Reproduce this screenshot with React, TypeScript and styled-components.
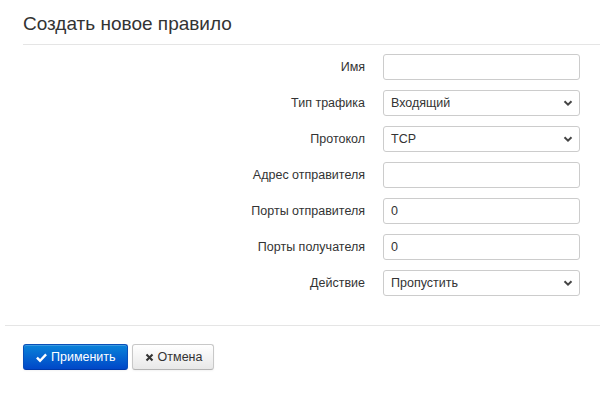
import React from "react";
import styled, { createGlobalStyle } from "styled-components";

const Global = createGlobalStyle`
  html, body { margin: 0; padding: 0; background: #fff; }
  body { font-family: "Liberation Sans", Arial, sans-serif; color: #333; }
  * { box-sizing: border-box; }
`;

const Page = styled.div`
  width: 600px;
  height: 393px;
  padding-top: 13px;
  background: #fff;
  overflow: hidden;
`;

const Header = styled.div`
  margin-left: 23px;
  padding-bottom: 9px;
  border-bottom: 1px solid #e5e5e5;
`;

const Title = styled.h1`
  margin: 0;
  font-size: 19px;
  font-weight: normal;
  line-height: 22px;
  color: #333;
`;

const Form = styled.div`
  display: grid;
  grid-template-columns: 360px 197px;
  column-gap: 18px;
  row-gap: 10px;
  padding-top: 9px;
  padding-bottom: 29px;
  margin-left: 5px;
  border-bottom: 1px solid #e5e5e5;
`;

const Label = styled.label`
  font-size: 12.5px;
  line-height: 26px;
  text-align: right;
  color: #333;
`;

const Field = styled.div`
  height: 26px;
  border: 1px solid #ccc;
  border-radius: 3px;
  background: #fff;
  font-size: 12.5px;
  line-height: 24px;
  padding: 0 7px;
  color: #333;
  display: flex;
  align-items: center;
  justify-content: space-between;
`;

const Chevron = styled.svg`
  width: 10px;
  height: 10px;
  margin-right: -1px;
`;

const Actions = styled.div`
  display: flex;
  gap: 4px;
  padding: 18px 0 0 23px;
`;

const Button = styled.button<{ $primary?: boolean }>`
  height: 26px;
  display: flex;
  align-items: center;
  gap: 4px;
  padding: 0 11px 0 12px;
  border-radius: 3px;
  font-family: "Liberation Sans", Arial, sans-serif;
  font-size: 12.5px;
  border: 1px solid ${(p) => (p.$primary ? "#0a4fb8" : "#c8c8c8")};
  border-bottom-color: ${(p) => (p.$primary ? "#0038a8" : "#b3b3b3")};
  color: ${(p) => (p.$primary ? "#fff" : "#333")};
  background: ${(p) =>
    p.$primary
      ? "linear-gradient(to bottom, #0a83d9, #0047c8)"
      : "linear-gradient(to bottom, #ffffff, #e8e8e8)"};
  box-shadow: inset 0 1px 0 rgba(255,255,255,0.2), 0 1px 2px rgba(0,0,0,0.05);
`;

const Icon = styled.svg<{ $size?: number }>`
  width: ${(p) => p.$size ?? 11}px;
  height: ${(p) => p.$size ?? 11}px;
`;

const ChevronDown = () => (
  <Chevron viewBox="0 0 10 10">
    <path d="M1.5 3.2 L5 6.6 L8.5 3.2" fill="none" stroke="#444" strokeWidth="2" />
  </Chevron>
);

type Row = { label: string; value?: string; select?: boolean };

const rows: Row[] = [
  { label: "Имя" },
  { label: "Тип трафика", value: "Входящий", select: true },
  { label: "Протокол", value: "TCP", select: true },
  { label: "Адрес отправителя" },
  { label: "Порты отправителя", value: "0" },
  { label: "Порты получателя", value: "0" },
  { label: "Действие", value: "Пропустить", select: true },
];

export default function App() {
  return (
    <Page>
      <Global />
      <Header>
        <Title>Создать новое правило</Title>
      </Header>
      <Form>
        {rows.map((r) => (
          <React.Fragment key={r.label}>
            <Label>{r.label}</Label>
            <Field>
              <span>{r.value ?? ""}</span>
              {r.select && <ChevronDown />}
            </Field>
          </React.Fragment>
        ))}
      </Form>
      <Actions>
        <Button $primary>
          <Icon viewBox="0 0 12 12">
            <path d="M1 6.2 L4.4 9.5 L11 2.6" fill="none" stroke="#fff" strokeWidth="2.6" />
          </Icon>
          Применить
        </Button>
        <Button>
          <Icon viewBox="0 0 12 12" $size={9}>
            <path d="M2 2 L10 10 M10 2 L2 10" fill="none" stroke="#333" strokeWidth="2.8" />
          </Icon>
          Отмена
        </Button>
      </Actions>
    </Page>
  );
}
